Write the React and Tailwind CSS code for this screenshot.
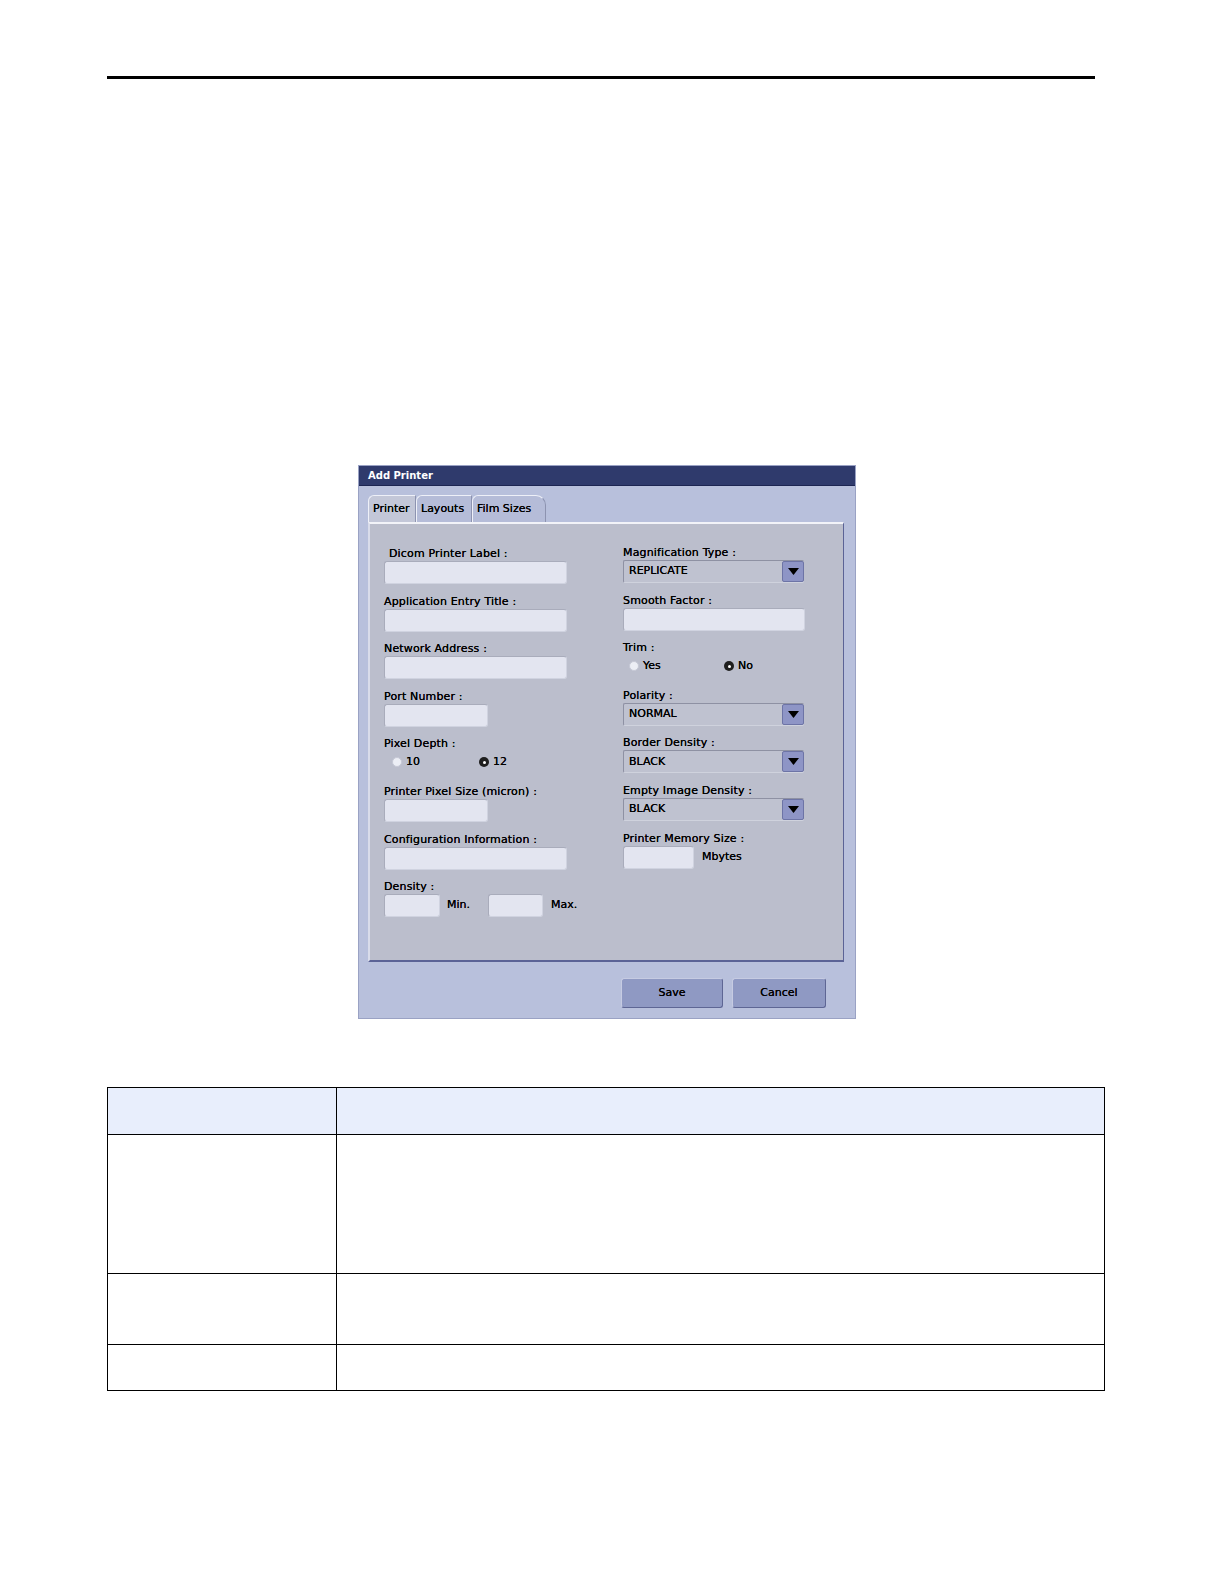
import React from "react";

const font = { fontFamily: "'DejaVu Sans', Verdana, sans-serif" };

const Label = ({ children, className = "" }) => (
  <div className={"h-[14px] text-[11px] leading-[14px] text-black tracking-[0.15px] [text-shadow:0_0_0.5px_#000] " + className}>
    {children}
  </div>
);

const Input = ({ w = "w-[183px]" }) => (
  <div className={`${w} h-[23px] rounded-[3px] bg-[#e3e5f0] border-t border-l border-[#a9acbb] border-b border-r border-b-[#d0d3e0] border-r-[#d0d3e0]`} />
);

const Select = ({ value }) => (
  <div className="w-[181px] h-[23px] flex items-stretch rounded-[2px] bg-[#bfc2d0] border-t border-l border-[#8e91a3] border-b border-b-[#cfd2dd]">
    <div className="flex-1 flex items-center pl-[5px] text-[11px] text-black [text-shadow:0_0_0.5px_#000]">{value}</div>
    <div className="w-[22px] flex items-center justify-center bg-[#8e95c6] border border-[#6d74a6] rounded-[2px]">
      <svg width="11" height="7" viewBox="0 0 11 7">
        <path d="M0 0 L11 0 L5.5 7 Z" fill="#000" />
      </svg>
    </div>
  </div>
);

const Radio = ({ checked, label, className = "" }) => (
  <div className={"flex items-center gap-[4px] " + className}>
    <span
      className={`w-[10px] h-[10px] rounded-full flex items-center justify-center ${
        checked ? "bg-[#1e1e1e]" : "bg-[#eceef5] border border-[#c6c9d6]"
      }`}
    >
      {checked && <span className="w-[3px] h-[3px] rounded-full bg-white" />}
    </span>
    <span className="text-[11px] text-black [text-shadow:0_0_0.5px_#000]">{label}</span>
  </div>
);

const Field = ({ children }) => <div className="h-[47.6px] flex flex-col">{children}</div>;

const Tab = ({ children, active, className = "" }) => (
  <div
    className={`h-[27px] px-[4px] flex items-end pb-[5px] text-[11px] text-black [text-shadow:0_0_0.5px_#000] border-t border-l border-[#eef0f8] rounded-tl-[6px] ${
      active ? "bg-[#c3c7d8]" : "bg-[#b5bcd8]"
    } ${className}`}
  >
    {children}
  </div>
);

const btn =
  "h-[30px] rounded-[3px] bg-[#8f99c3] border border-[#5e6694] border-t-[#c6cbe2] border-l-[#c6cbe2] text-[11px] text-black [text-shadow:0_0_0.5px_#000]";

export default function App() {
  return (
    <div className="w-full min-h-screen bg-white" style={font}>
      {/* top rule */}
      <div className="pt-[76px] pl-[107px]">
        <div className="w-[988px] h-[3px] bg-black" />
      </div>

      {/* dialog */}
      <div className="mt-[386px] ml-[358px] w-[498px] h-[554px] bg-[#b8c0dc] border border-[#9aa2c4] flex flex-col">
        <div className="h-[20px] bg-[#2f3a6c] flex items-center pl-[9px] text-[10px] font-bold text-white border-b border-[#1d2552]">
          Add Printer
        </div>

        {/* tabs */}
        <div className="mt-[8px] pl-[9px] flex items-end h-[28px]">
          <Tab active className="w-[48px] border-r border-r-[#8d93b0]">Printer</Tab>
          <Tab className="w-[56px] border-r border-r-[#8d93b0]">Layouts</Tab>
          <Tab className="w-[74px] border-r border-r-[#8d93b0] rounded-tr-[10px]">Film Sizes</Tab>
        </div>

        {/* panel */}
        <div className="ml-[9px] w-[476px] h-[440px] bg-[#bbbecc] border-t-2 border-t-[#f2f3f8] border-l-2 border-l-[#d9dcea] border-r border-r-[#5b6396] border-b-2 border-b-[#5b6396] pt-[23px] pl-[14px] flex">
          {/* left column */}
          <div className="w-[239px] flex flex-col">
            <Field>
              <Label className="pl-[5px]">Dicom Printer Label :</Label>
              <Input />
            </Field>
            <Field>
              <Label>Application Entry Title :</Label>
              <Input />
            </Field>
            <Field>
              <Label>Network Address :</Label>
              <Input />
            </Field>
            <Field>
              <Label>Port Number :</Label>
              <Input w="w-[104px]" />
            </Field>
            <Field>
              <Label>Pixel Depth :</Label>
              <div className="flex items-center h-[20px] mt-[1px] pl-[8px]">
                <Radio label="10" className="w-[87px]" />
                <Radio checked label="12" />
              </div>
            </Field>
            <Field>
              <Label>Printer Pixel Size (micron) :</Label>
              <Input w="w-[104px]" />
            </Field>
            <Field>
              <Label>Configuration Information :</Label>
              <Input />
            </Field>
            <Field>
              <Label>Density :</Label>
              <div className="flex items-center">
                <Input w="w-[56px]" />
                <span className="ml-[7px] w-[41px] text-[11px] text-black [text-shadow:0_0_0.5px_#000]">Min.</span>
                <Input w="w-[55px]" />
                <span className="ml-[8px] text-[11px] text-black [text-shadow:0_0_0.5px_#000]">Max.</span>
              </div>
            </Field>
          </div>

          {/* right column */}
          <div className="flex flex-col -mt-[1px]">
            <Field>
              <Label>Magnification Type :</Label>
              <Select value="REPLICATE" />
            </Field>
            <Field>
              <Label>Smooth Factor :</Label>
              <Input w="w-[182px]" />
            </Field>
            <Field>
              <Label>Trim :</Label>
              <div className="flex items-center h-[20px] mt-[1px] pl-[6px]">
                <Radio label="Yes" className="w-[95px]" />
                <Radio checked label="No" />
              </div>
            </Field>
            <Field>
              <Label>Polarity :</Label>
              <Select value="NORMAL" />
            </Field>
            <Field>
              <Label>Border Density :</Label>
              <Select value="BLACK" />
            </Field>
            <Field>
              <Label>Empty Image Density :</Label>
              <Select value="BLACK" />
            </Field>
            <Field>
              <Label>Printer Memory Size :</Label>
              <div className="flex items-center">
                <Input w="w-[71px]" />
                <span className="ml-[8px] text-[11px] text-black [text-shadow:0_0_0.5px_#000]">Mbytes</span>
              </div>
            </Field>
          </div>
        </div>

        {/* buttons */}
        <div className="mt-[16px] flex justify-end gap-[9px] pr-[29px]">
          <button className={"w-[102px] " + btn}>Save</button>
          <button className={"w-[94px] " + btn}>Cancel</button>
        </div>
      </div>

      {/* table */}
      <div className="mt-[68px] ml-[107px] w-[998px] border border-black">
        <div className="grid grid-cols-[229px_1fr] h-[47px] bg-[#e8eefc] border-b border-black">
          <div className="border-r border-black" />
          <div />
        </div>
        <div className="grid grid-cols-[229px_1fr] h-[139px] border-b border-black">
          <div className="border-r border-black" />
          <div />
        </div>
        <div className="grid grid-cols-[229px_1fr] h-[71px] border-b border-black">
          <div className="border-r border-black" />
          <div />
        </div>
        <div className="grid grid-cols-[229px_1fr] h-[45px]">
          <div className="border-r border-black" />
          <div />
        </div>
      </div>
    </div>
  );
}
